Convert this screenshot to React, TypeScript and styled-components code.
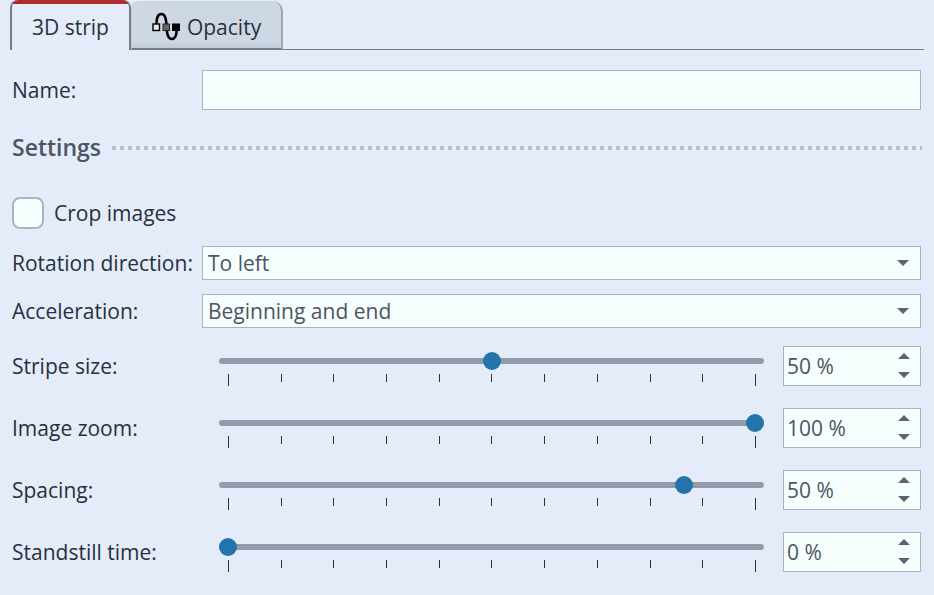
import React, { useId, useState } from "react";
import styled, { createGlobalStyle } from "styled-components";

const GlobalStyle = createGlobalStyle`
  *, *::before, *::after { box-sizing: border-box; }
  body {
    margin: 0;
    background: #e3ecf8;
    color: #29303d;
    font-family: "Open Sans", "Noto Sans", sans-serif;
    font-size: 21px;
    line-height: 28px;
  }
  button, input, select { font: inherit; color: inherit; }
`;

const TabBar = styled.div`
  display: flex;
  align-items: flex-end;
  height: 50px;
  margin: 0 10px;
  background: linear-gradient(#747e8b, #747e8b) left bottom / 100% 1px no-repeat;
`;

const Tab = styled.button<{ $active?: boolean }>`
  display: flex;
  align-items: center;
  justify-content: center;
  gap: 7px;
  padding: ${(p) => (p.$active ? 3 : 4)}px 20px 0;
  height: ${(p) => (p.$active ? 50 : 49)}px;
  border: 2px solid ${(p) => (p.$active ? "#747e8b" : "#9ca8b5")};
  border-width: ${(p) => (p.$active ? "0 2px" : "0 2px 2px 1px")};
  border-bottom-color: #747e8b;
  border-left-color: ${(p) => (p.$active ? "#747e8b" : "#c3ccd8")};
  border-radius: ${(p) => (p.$active ? "8px 8px 0 0" : "8px 10px 0 0")};
  background: ${(p) =>
    p.$active
      ? "linear-gradient(#b02a2e 4px, #e3ecf8 4px)"
      : "linear-gradient(#ced8e4 0 40px, #c3cdd9)"};
`;

const Panel = styled.main`
  display: flex;
  flex-direction: column;
  padding: 20px 13px 23px 12px;
`;

const Row = styled.div<{ $gap?: number }>`
  display: grid;
  grid-template-columns: 190px minmax(0, 1fr);
  align-items: center;
  margin-top: ${(p) => p.$gap ?? 0}px;
`;

const Label = styled.label`
  white-space: nowrap;
`;

const TextBox = styled.input`
  width: 100%;
  height: 40px;
  padding: 0 5px;
  border: 1px solid #a9b3c2;
  background: #f7fffe;
  outline: none;
`;

const SectionTitle = styled.h2`
  display: flex;
  align-items: center;
  gap: 11px;
  margin: 20px -1px 0 0;
  color: #4c5563;
  font-size: 23px;
  font-weight: 600;
  line-height: 34px;

  &::after {
    content: "";
    flex: 1;
    height: 4px;
    margin-top: 2px;
    background: repeating-linear-gradient(to right, #b6c0cd 0 4px, transparent 4px 8px);
  }
`;

const CheckLabel = styled.label`
  display: flex;
  align-items: center;
  align-self: flex-start;
  gap: 10px;
  margin-top: 33px;
`;

const CheckBox = styled.input`
  appearance: none;
  width: 32px;
  height: 32px;
  margin: 0;
  border: 2px solid #a9b3c2;
  border-radius: 8px;
  background: #f7fffe;

  &:checked { background: #2473ab; }
`;

const SelectBox = styled.div`
  display: grid;
  align-items: center;

  & > * { grid-area: 1 / 1; }
  svg { justify-self: end; margin-right: 12px; pointer-events: none; }
`;

const Select = styled.select`
  appearance: none;
  width: 100%;
  height: 34px;
  padding: 0 32px 0 5px;
  border: 1px solid #a9b3c2;
  border-radius: 0;
  background: #f7fffe;
  color: #4c5563;
  outline: none;
`;

const SliderFields = styled.div`
  display: grid;
  grid-template-columns: minmax(0, 1fr) 138px;
  gap: 19px;
  padding-left: 17px;
`;

const SliderColumn = styled.div`
  padding-top: 6px;
`;

const Slider = styled.input`
  appearance: none;
  display: block;
  width: 100%;
  height: 18px;
  margin: 0;
  background: none;

  &::-webkit-slider-runnable-track {
    height: 6px;
    border-radius: 3px;
    background: #929baa;
  }
  &::-webkit-slider-thumb {
    appearance: none;
    width: 18px;
    height: 18px;
    margin-top: -6px;
    border-radius: 50%;
    background: #2473ab;
  }
`;

const Ticks = styled.div`
  display: flex;
  justify-content: space-between;
  margin-top: 4px;
  padding: 0 8px 0 9px;
`;

const Tick = styled.span<{ $major: boolean }>`
  width: 1px;
  height: ${(p) => (p.$major ? 12 : 8)}px;
  background: #29303d;
`;

const SpinBox = styled.div`
  display: flex;
  height: 40px;
  border: 1px solid #a9b3c2;
  background: #f7fffe;
`;

const SpinInput = styled.input`
  flex: 1;
  min-width: 0;
  padding: 0 0 0 3px;
  border: 0;
  background: none;
  color: #4c5563;
  outline: none;
`;

const SpinButtons = styled.div`
  display: flex;
  flex-direction: column;
  width: 32px;
`;

const SpinButton = styled.button`
  display: flex;
  flex: 1;
  align-items: center;
  justify-content: center;
  padding: 0 0 1px;
  border: 0;
  background: none;
`;

const Arrow = ({ up }: { up?: boolean }) => (
  <svg width="12" height="6" viewBox="0 0 12 6" aria-hidden="true">
    <path d={up ? "M0 6 6 0l6 6z" : "M0 0h12L6 6z"} fill="#5a6472" />
  </svg>
);

const CurveIcon = () => (
  <svg width="28" height="30" viewBox="0 0 28 30" aria-hidden="true">
    <path
      d="M4.500 12C4.500 5 6 2 9.500 2s4.800 4 5 12 1.500 13 5.200 13 5-4 5-10"
      fill="none"
      stroke="#000"
      strokeWidth="2.600"
    />
    <rect x="1" y="12" width="6.500" height="6.500" fill="#e4e6e8" stroke="#000" strokeWidth="1.400" />
    <rect x="11" y="12" width="6.500" height="6.500" fill="#666" stroke="#222" strokeWidth="1" />
    <rect x="20" y="11.500" width="8" height="7.500" />
  </svg>
);

interface SelectRowProps {
  label: string;
  options: string[];
  gap: number;
}

function SelectRow({ label, options, gap }: SelectRowProps) {
  const id = useId();
  return (
    <Row $gap={gap}>
      <Label htmlFor={id}>{label}</Label>
      <SelectBox>
        <Select id={id}>
          {options.map((o) => (
            <option key={o}>{o}</option>
          ))}
        </Select>
        <Arrow />
      </SelectBox>
    </Row>
  );
}

interface SliderRowProps {
  label: string;
  value: number;
  min?: number;
  gap: number;
}

function SliderRow({ label, value: initial, min = 0, gap }: SliderRowProps) {
  const id = useId();
  const [value, setValue] = useState(initial);
  const change = (next: number) => setValue(Math.max(min, Math.min(100, next || 0)));
  return (
    <Row $gap={gap}>
      <Label htmlFor={id}>{label}</Label>
      <SliderFields>
        <SliderColumn>
          <Slider
            type="range"
            aria-label={label}
            min={min}
            max={100}
            value={value}
            onChange={(e) => change(Number(e.target.value))}
          />
          <Ticks>
            {Array.from({ length: 11 }, (_, i) => (
              <Tick key={i} $major={i % 10 === 0} />
            ))}
          </Ticks>
        </SliderColumn>
        <SpinBox>
          <SpinInput
            id={id}
            type="text"
            value={`${value} %`}
            onChange={(e) => change(parseInt(e.target.value, 10))}
          />
          <SpinButtons>
            <SpinButton aria-label={`Increase ${label}`} onClick={() => change(value + 1)}>
              <Arrow up />
            </SpinButton>
            <SpinButton aria-label={`Decrease ${label}`} onClick={() => change(value - 1)}>
              <Arrow />
            </SpinButton>
          </SpinButtons>
        </SpinBox>
      </SliderFields>
    </Row>
  );
}

export default function App() {
  return (
    <>
      <GlobalStyle />
      <TabBar role="tablist">
        <Tab role="tab" aria-selected="true" $active>
          3D strip
        </Tab>
        <Tab role="tab" aria-selected="false">
          <CurveIcon />
          Opacity
        </Tab>
      </TabBar>
      <Panel>
        <Row>
          <Label htmlFor="name">Name:</Label>
          <TextBox id="name" type="text" />
        </Row>
        <SectionTitle>Settings</SectionTitle>
        <CheckLabel>
          <CheckBox type="checkbox" />
          Crop images
        </CheckLabel>
        <SelectRow gap={17} label="Rotation direction:" options={["To left", "To right"]} />
        <SelectRow gap={14} label="Acceleration:" options={["Beginning and end", "None"]} />
        <SliderRow gap={18} label="Stripe size:" value={50} />
        <SliderRow gap={22} label="Image zoom:" value={100} />
        <SliderRow gap={22} label="Spacing:" value={50} min={-270} />
        <SliderRow gap={22} label="Standstill time:" value={0} />
      </Panel>
    </>
  );
}
